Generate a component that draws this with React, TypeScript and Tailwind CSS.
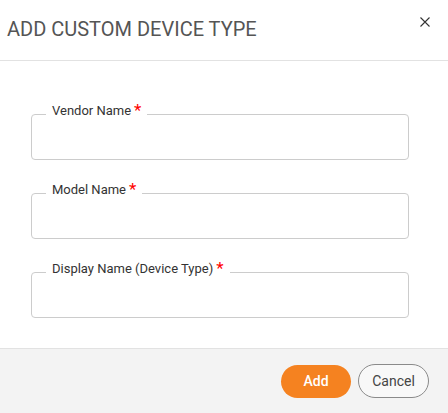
import React from "react";

function Field({ label }: { label: string }) {
  return (
    <div className="relative ml-[31px] w-[378px] h-[46px] border border-[#cccccc] rounded-[4px]">
      <span className="absolute left-[14px] top-[-12px] bg-white px-[6px] text-[13px] leading-[15px] text-[#333333] whitespace-nowrap">
        {label}
        <span className="ml-[3px] text-[17px] leading-[15px] text-[#ff0000] align-top">*</span>
      </span>
    </div>
  );
}

export default function App() {
  return (
    <div className="w-[448px] h-[413px] bg-white flex flex-col font-['Roboto',sans-serif]">
      <div className="h-[61px] border-b border-[#e2e2e2] flex justify-between shrink-0">
        <div className="pt-[17px] pl-[7px] text-[20px] leading-[24px] text-[#555555]">ADD CUSTOM DEVICE TYPE</div>
        <div className="pt-[17px] pr-[18px]">
          <svg width="10" height="10" viewBox="0 0 10 10">
            <path d="M0.5 0.5 L9.5 9.5 M9.5 0.5 L0.5 9.5" stroke="#333" strokeWidth="1.1" fill="none" />
          </svg>
        </div>
      </div>
      <div className="flex-1 flex flex-col gap-[33px] pt-[53px]">
        <Field label="Vendor Name" />
        <Field label="Model Name" />
        <Field label="Display Name (Device Type)" />
      </div>
      <div className="h-[65px] shrink-0 border-t border-[#e2e2e2] bg-[#f3f3f3] flex items-center justify-end gap-[7px] pr-[19px]">
        <button className="w-[70px] h-[33px] rounded-full bg-[#f58220] text-white text-[14px] font-medium">Add</button>
        <button className="w-[71px] h-[34px] rounded-full border border-[#8a8a8a] bg-[#f8f8f8] text-[#444444] text-[14px]">Cancel</button>
      </div>
    </div>
  );
}
